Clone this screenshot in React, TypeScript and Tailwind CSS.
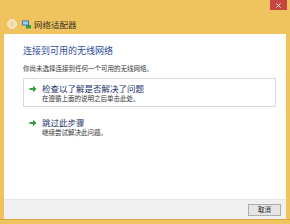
const font = { fontFamily: '"Noto Sans CJK SC", "Noto Sans", sans-serif' };

function GreenArrow() {
  return (
    <svg width="8" height="8" viewBox="0 0 8 8" className="shrink-0">
      <path d="M0.5 3h3.5V0.8L7.5 4 4 7.2V5H0.5z" fill="#2f9e3a" />
    </svg>
  );
}

function Option({ title, sub, boxed }: { title: string; sub: string; boxed?: boolean }) {
  return (
    <div
      className={
        'flex gap-[5px] pl-[5px] pt-[4px] pb-[3px] mr-[10px] ' +
        (boxed ? 'border border-[#d5dbe3]' : 'border border-transparent')
      }
    >
      <div className="pt-[2px]">
        <GreenArrow />
      </div>
      <div className="flex flex-col">
        <span className="text-[8.5px] leading-[11px] text-[#1c2f6b]">{title}</span>
        <span className="text-[6.5px] leading-[9px] text-[#333]">{sub}</span>
      </div>
    </div>
  );
}

export default function App() {
  return (
    <div className="w-[290px] h-[224px] bg-[#efc45f] flex flex-col" style={font}>
      <div className="h-[34px] relative flex items-center pl-[7px] pt-[14px]">
        <div className="w-[10px] h-[10px] rounded-full bg-[#f6e2b0] border border-[#f9edd0] flex items-center justify-center">
          <svg width="6" height="6" viewBox="0 0 6 6">
            <path d="M4 1L2 3l2 2" stroke="#d9c08a" strokeWidth="1" fill="none" />
          </svg>
        </div>
        <svg width="9" height="9" viewBox="0 0 9 9" className="ml-[5px]">
          <rect x="0" y="0.5" width="7" height="5" fill="#3b78c4" />
          <rect x="1" y="1.5" width="5" height="3" fill="#9fd0f5" />
          <rect x="4" y="5" width="5" height="3.5" fill="#2f9e3a" />
        </svg>
        <span className="ml-[3px] text-[8.5px] text-[#3a3220]">网络适配器</span>
        <div className="absolute right-[3px] top-0 w-[17px] h-[10px] bg-[#c8463f] flex items-center justify-center">
          <svg width="5" height="5" viewBox="0 0 5 5">
            <path d="M0.5 0.5l4 4M4.5 0.5l-4 4" stroke="#fff" strokeWidth="1" />
          </svg>
        </div>
      </div>
      <div className="mx-[4px] flex-1 flex flex-col bg-white">
        <div className="flex-1 pl-[19px] pt-[10px]">
          <div className="text-[9px] leading-[14px] text-[#2a4a9c]">连接到可用的无线网络</div>
          <div className="mt-[5px] text-[6.5px] leading-[10px] text-[#333]">你尚未选择连接到任何一个可用的无线网络。</div>
          <div className="mt-[5px]">
            <Option boxed title="检查以了解是否解决了问题" sub="在遵循上面的说明之后单击此处。" />
          </div>
          <div className="mt-[5px]">
            <Option title="跳过此步骤" sub="继续尝试解决此问题。" />
          </div>
        </div>
        <div className="h-[20px] bg-[#f0f0f0] border-t border-[#e6e6e6] flex items-center justify-end pr-[5px]">
          <button className="w-[33px] h-[12px] border border-[#adadad] bg-[#e5e5e5] text-[6.5px] leading-none text-[#222] flex items-center justify-center">
            取消
          </button>
        </div>
      </div>
      <div className="h-[5px] border-t border-[#d9a93f]" />
    </div>
  );
}
